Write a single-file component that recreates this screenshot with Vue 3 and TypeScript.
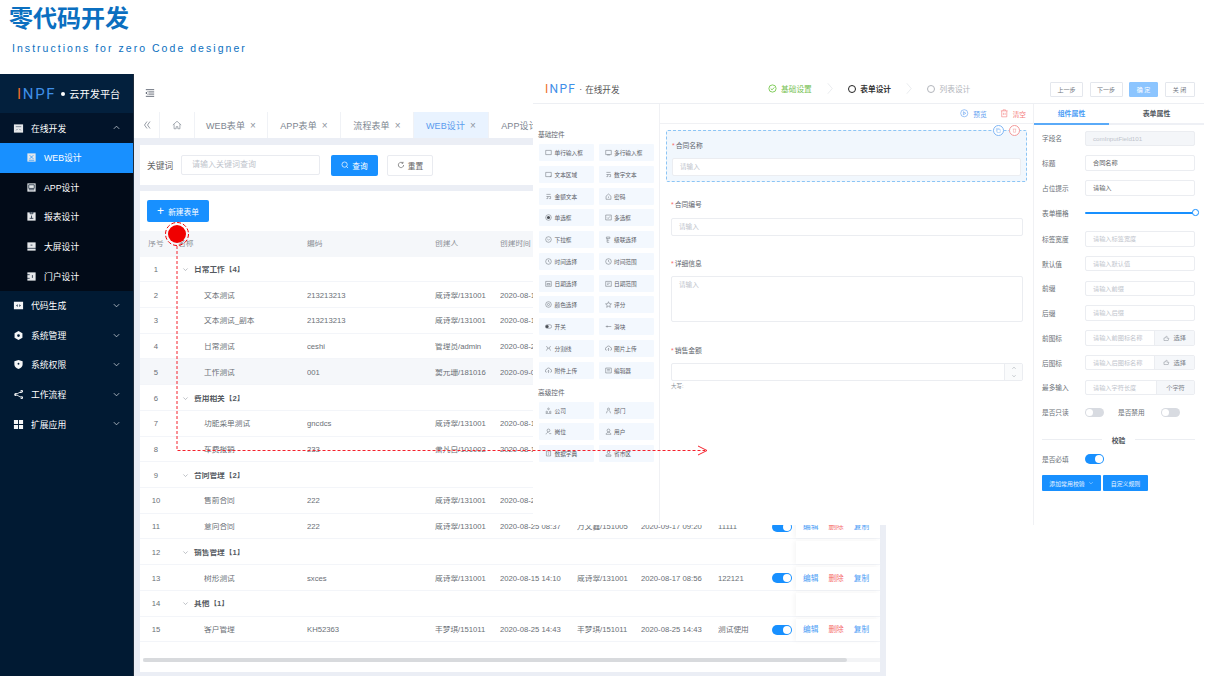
<script setup lang="ts">
interface Row { n: number; name: string; group?: boolean; code?: string; by?: string; at?: string; mod?: string; modAt?: string; note?: string }
const rows: Row[] = [
  { n: 1, name: '日常工作【4】', group: true },
  { n: 2, name: '文本测试', code: '213213213', by: '咸诗翠/131001', at: '2020-08-1' },
  { n: 3, name: '文本测试_副本', code: '213213213', by: '咸诗翠/131001', at: '2020-08-1' },
  { n: 4, name: '日常测试', code: 'ceshi', by: '管理员/admin', at: '2020-08-2' },
  { n: 5, name: '工作测试', code: '001', by: '窦元珊/181016', at: '2020-09-0' },
  { n: 6, name: '费用相关【2】', group: true },
  { n: 7, name: '功能菜单测试', code: 'gncdcs', by: '咸诗翠/131001', at: '2020-08-1' },
  { n: 8, name: '车费报销', code: '233', by: '萧凡白/101002', at: '2020-08-1' },
  { n: 9, name: '合同管理【2】', group: true },
  { n: 10, name: '售前合同', code: '222', by: '咸诗翠/131001', at: '2020-08-2' },
  { n: 11, name: '意向合同', code: '222', by: '咸诗翠/131001', at: '2020-08-25 08:37', mod: '万文鑫/151005', modAt: '2020-09-17 09:20', note: '11111' },
  { n: 12, name: '销售管理【1】', group: true },
  { n: 13, name: '树形测试', code: 'sxces', by: '咸诗翠/131001', at: '2020-08-15 14:10', mod: '咸诗翠/131001', modAt: '2020-08-17 08:56', note: '122121' },
  { n: 14, name: '其他【1】', group: true },
  { n: 15, name: '客户管理', code: 'KH52363', by: '丰梦琪/151011', at: '2020-08-25 14:43', mod: '丰梦琪/151011', modAt: '2020-08-25 14:43', note: '测试使用' },
]
const subMenu = [
  { t: 'WEB设计', d: 'M4 3.500l4 4M8 3.500l-4 4M3 9h6', active: true },
  { t: 'APP设计', d: 'M3 3h6v4H3zM3 8.500h6' },
  { t: '报表设计', d: 'M4.500 1h3v2h-3zM6 5v3M4 8h4' },
  { t: '大屏设计', d: 'M1 8h10M5 4.500h2' },
  { t: '门户设计', d: 'M1 4h3M1 8h3M7 4.500v3' },
]
const mainMenu = [
  { t: '代码生成', d: 'M1 2h10v8H1zM5 4.500L3.500 6 5 7.500M7 4.500L8.500 6 7 7.500' },
  { t: '系统管理', d: 'M6 1l4.300 2.500v5L6 11 1.700 8.500v-5zM6 4.500a1.500 1.500 0 100 3 1.500 1.500 0 000-3z' },
  { t: '系统权限', d: 'M6 1l4.500 1.500v3.500c0 2.500-2 4-4.500 5-2.500-1-4.500-2.500-4.500-5V2.500zM6 4.200a1 1 0 100 2 1 1 0 000-2z' },
  { t: '工作流程', d: 'M3 4.300a1.700 1.700 0 100 3.400 1.700 1.700 0 000-3.400zM9.500 1a1.500 1.500 0 100 3 1.500 1.500 0 000-3zM9.500 8a1.500 1.500 0 100 3 1.500 1.500 0 000-3zM3 5.700l6-3.400.4.700-6 3.400zM3.400 5.600l6 3.400-.4.700-6-3.400z' },
  { t: '扩展应用', d: 'M1 1h4.500v4.500H1zM6.500 1H11v4.500H6.500zM1 6.500h4.500V11H1zM6.500 6.500H11V11H6.500z' },
]
const tabs = ['WEB表单', 'APP表单', '流程表单', 'WEB设计', 'APP设计']
const basic = [
  ['单行输入框', 'M1 2h8v6H1z'], ['多行输入框', 'M1 2h8v6H1zM3 8.500h4'], ['文本区域', 'M1 2h8v6H1zM7 8l2-1'], ['数字文本', 'M2 2h6M2 8h2V5M6 8h2V5M2 5h6'],
  ['金额文本', 'M2 2h6M2 8h2V5M6 8h2V5M2 5h6'], ['密码', 'M1.500 9V4.500L5 1.500l3.500 3V9zM5 5v2'], ['单选框', 'R'], ['多选框', 'M1 1.500h8v7H1zM3 5l1.500 1.500L7 3.500'],
  ['下拉框', 'C M3.200 4.200L5 6l1.800-1.800'], ['级联选择', 'M2 1.500h5v2H2zM3 3.500V9M3 6h3M3 9h3'], ['时间选择', 'C M5 2.800V5l1.600 1.200'], ['时间范围', 'C M5 2.800V5l1.600 1.200'],
  ['日期选择', 'M1 2h8v7H1zM3 5h4v2H3z'], ['日期范围', 'M1 2h8v7H1zM3 4.500h4M3 6.500h2'], ['颜色选择', 'C M5 3.500a1.500 1.500 0 100 3 1.500 1.500 0 000-3z'], ['评分', 'M5 1l1.200 2.800 3 .3-2.300 2 .7 2.900L5 7.500 2.400 9l.7-2.900-2.300-2 3-.3z'],
  ['开关', 'S'], ['滑块', 'M1 5h8M3 3.500v3'], ['分割线', 'M2 1.500l2 3-2 3.500M8 1.500l-2 3 2 3.500M4 4.500h2'], ['图片上传', 'U'],
  ['附件上传', 'U'], ['编辑器', 'M1 1.500h8v7H1zM3 3.500h4M3 5.500h4'],
]
const advanced = [
  ['公司', 'M5 1.500a1.200 1.200 0 100 2.400 1.200 1.200 0 000-2.400zM2.500 6a1.200 1.200 0 100 2.400 1.200 1.200 0 000-2.400zM7.500 6a1.200 1.200 0 100 2.400 1.200 1.200 0 000-2.400zM1 9.500h8'],
  ['部门', 'M5 1.500a1.500 1.500 0 100 3 1.500 1.500 0 000-3zM2 9l1.500-4M8 9L6.500 5'],
  ['岗位', 'M5 1.500a2 2 0 100 4 2 2 0 000-4zM1.500 9c.5-2 2-3 3.500-3M6 8h3'],
  ['用户', 'M5 1.500a2 2 0 100 4 2 2 0 000-4zM1.500 9c.5-2 2-3 3.500-3s3 1 3.500 3z'],
  ['数据字典', 'M2 1.500h6v7H2zM4 4h2M4 6h2'],
  ['省市区', 'M5 1.500a1.800 1.800 0 100 3.600 1.800 1.800 0 000-3.600zM1.500 9h7v-2h-7z'],
]
const props1 = [
  { l: '标签宽度', p: '请输入标签宽度' }, { l: '默认值', p: '请输入默认值' }, { l: '前缀', p: '请输入前缀' }, { l: '后缀', p: '请输入后缀' },
]
</script>

<template>
  <div class="page">
    <header class="hero">
      <h1>零代码开发</h1>
      <p>Instructions for zero Code designer</p>
    </header>

    <div class="shell">
      <aside class="side">
        <div class="brand"><span class="logo"><i>I</i>NPF</span><b class="dot"></b><span>云开发平台</span></div>
        <div class="mi group-open">
          <svg class="ic" viewBox="0 0 12 12"><path class="fill" d="M1 1.500h10v9H1z"/><path class="cut" d="M3 4h6M5 6.500L3.500 8M7 6.500L8.500 8"/></svg>
          <span>在线开发</span>
          <svg class="caret" viewBox="0 0 10 10"><path d="M2 6.500L5 3.500l3 3"/></svg>
        </div>
        <div class="subs">
          <div v-for="s in subMenu" :key="s.t" class="si" :class="{ on: s.active }">
            <svg class="ic" viewBox="0 0 12 12"><path class="fill" d="M1.500 1.500h9v9h-9z"/><path class="cut2" :class="{ blue: s.active }" :d="s.d"/></svg>
            <span>{{ s.t }}</span>
          </div>
        </div>
        <div v-for="m in mainMenu" :key="m.t" class="mi">
          <svg class="ic" viewBox="0 0 12 12"><path class="wh" :d="m.d"/></svg>
          <span>{{ m.t }}</span>
          <svg class="caret" viewBox="0 0 10 10"><path d="M2 3.500l3 3 3-3"/></svg>
        </div>
      </aside>

      <main class="main">
        <div class="topbar">
          <svg class="fold" viewBox="0 0 12 12"><path d="M1 2h10M4 4.700h7M4 7.300h7M1 10h10M3 4.500L1 6l2 1.500"/></svg>
        </div>
        <nav class="tabs">
          <div class="tab t0"><svg viewBox="0 0 10 10"><path d="M5 1.500L2.500 5 5 8.500M8 1.500L5.500 5 8 8.500"/></svg></div>
          <div class="tab t1"><svg viewBox="0 0 12 12"><path d="M1 6l5-4.500L11 6M2.500 5v5.500h2.500V8h2v2.500h2.500V5"/></svg></div>
          <div v-for="(t, i) in tabs" :key="t" class="tab" :class="{ cur: i === 3 }">{{ t }}<em>×</em></div>
        </nav>
        <section class="card search">
          <label>关键词</label>
          <div class="s-input">请输入关键词查询</div>
          <button class="btn primary"><svg viewBox="0 0 10 10"><path d="M4.500 1.200a3.300 3.300 0 100 6.600 3.300 3.300 0 000-6.600zM7 7l1.800 1.800"/></svg>查询</button>
          <button class="btn plain"><svg viewBox="0 0 10 10"><path d="M8.300 5a3.300 3.300 0 11-1-2.400M7.500 1v1.800H5.700"/></svg>重置</button>
        </section>
        <section class="card list">
          <button class="btn primary add"><span>+</span>新建表单</button>
          <div class="row head">
            <div class="c-n">序号</div><div class="c-name">名称</div><div>编码</div><div>创建人</div><div>创建时间</div><div></div><div></div><div></div><div></div><div class="ops"></div>
          </div>
          <div v-for="r in rows" :key="r.n" class="row" :class="{ hov: r.n === 5, grp: r.group }">
            <div class="c-n">{{ r.n }}</div>
            <div class="c-name" :class="r.group ? 'g' : 'l'">
              <svg v-if="r.group" viewBox="0 0 10 10"><path d="M2 3.500l3 3 3-3"/></svg>{{ r.name }}
            </div>
            <div>{{ r.code }}</div><div>{{ r.by }}</div><div>{{ r.at }}</div><div>{{ r.mod }}</div><div>{{ r.modAt }}</div><div>{{ r.note }}</div>
            <div><span v-if="r.mod" class="sw big on"></span></div>
            <div class="ops"><template v-if="r.mod"><a>编辑</a><a class="del">删除</a><a>复制</a></template></div>
          </div>
          <div class="scroll"><div></div></div>
        </section>
      </main>
    </div>

    <div class="designer">
      <div class="d-head">
        <div class="d-brand"><span class="logo small"><i>I</i>NPF</span><span class="sep">·</span><span>在线开发</span></div>
        <div class="steps">
          <div class="step ok"><svg viewBox="0 0 10 10"><circle cx="5" cy="5" r="4"/><path d="M3 5l1.500 1.500L7 3.800"/></svg>基础设置</div>
          <svg class="arrow" viewBox="0 0 8 16"><path d="M1 1l6 7-6 7"/></svg>
          <div class="step act"><i class="ring"></i>表单设计</div>
          <svg class="arrow" viewBox="0 0 8 16"><path d="M1 1l6 7-6 7"/></svg>
          <div class="step off"><i class="ring"></i>列表设计</div>
        </div>
        <div class="d-btns">
          <button>上一步</button><button>下一步</button><button class="sure">确 定</button><button class="close">关 闭</button>
        </div>
      </div>
      <div class="d-body">
        <div class="palette">
          <h4>基础控件</h4>
          <div class="pgrid">
            <div v-for="b in basic" :key="b[0]" class="pi">
              <svg viewBox="0 0 10 10">
                <template v-if="b[1] === 'R'"><circle cx="5" cy="5" r="4"/><circle class="solid" cx="5" cy="5" r="2.200"/></template>
                <template v-else-if="b[1] === 'S'"><rect x=".5" y="2.500" width="9" height="5" rx="2.500"/><circle class="solid" cx="3" cy="5" r="2.200"/></template>
                <template v-else-if="b[1] === 'U'"><path d="M2.500 7.500a2 2 0 01-.2-4 2.800 2.800 0 015.400 0 2 2 0 01-.2 4M5 8.500V5M3.800 6L5 4.800 6.200 6"/></template>
                <template v-else-if="b[1].startsWith('C ')"><circle cx="5" cy="5" r="4"/><path :d="b[1].slice(2)"/></template>
                <path v-else :d="b[1]"/>
              </svg>
              <span>{{ b[0] }}</span>
            </div>
          </div>
          <h4 class="adv">高级控件</h4>
          <div class="pgrid">
            <div v-for="b in advanced" :key="b[0]" class="pi">
              <svg viewBox="0 0 10 10"><path :d="b[1]"/></svg><span>{{ b[0] }}</span>
            </div>
          </div>
        </div>
        <div class="canvas">
          <div class="c-tools">
            <span class="tool blue"><svg viewBox="0 0 10 10"><circle cx="5" cy="5" r="4.200"/><path d="M4 3.200v3.600L6.800 5z"/></svg>预览</span>
            <span class="tool red"><svg viewBox="0 0 10 10"><path d="M1 2.200h8M3.500 2V1h3v1M2 2.200V9.200h6V2.200M4 4.500v2.500M6 4.500v2.500"/></svg>清空</span>
          </div>
          <div class="form">
            <div class="selected">
              <label class="fl"><b>*</b>合同名称</label>
              <div class="fi">请输入</div>
              <span class="corner cb"><svg viewBox="0 0 10 10"><path d="M3 3.500h4.500V8H3zM2 6.500V2h4.500"/></svg></span>
              <span class="corner cr"><svg viewBox="0 0 10 10"><path d="M2.500 3h5M3.500 3v4.500h3V3"/></svg></span>
            </div>
            <div class="field f2"><label class="fl"><b>*</b>合同编号</label><div class="fi">请输入</div></div>
            <div class="field f3"><label class="fl"><b>*</b>详细信息</label><div class="fi ta">请输入</div></div>
            <div class="field f4">
              <label class="fl"><b>*</b>销售金额</label>
              <div class="fi num"><span class="stepper"><svg viewBox="0 0 10 10"><path d="M3 6l2-2 2 2"/></svg><svg viewBox="0 0 10 10"><path d="M3 4l2 2 2-2"/></svg></span></div>
              <div class="daxie">大写:</div>
            </div>
          </div>
        </div>
        <div class="props">
          <div class="p-tabs"><div class="p-on">组件属性</div><div>表单属性</div></div>
          <div class="p-body">
            <div class="pr"><label>字段名</label><div class="pinp dis">comInputField101</div></div>
            <div class="pr"><label>标题</label><div class="pinp val">合同名称</div></div>
            <div class="pr"><label>占位提示</label><div class="pinp val">请输入</div></div>
            <div class="pr slider-row"><label>表单栅格</label><div class="slider"><i></i></div></div>
            <div v-for="p in props1" :key="p.l" class="pr"><label>{{ p.l }}</label><div class="pinp">{{ p.p }}</div></div>
            <div class="pr"><label>前图标</label><div class="pinp grp-i"><span>请输入前图标名称</span><em><svg viewBox="0 0 10 10"><path d="M1.500 4.500v4h6.500l1-3.500H6l.3-2.500c-.3-1-1-1-1.300-.8L3.500 4.500z"/></svg>选择</em></div></div>
            <div class="pr"><label>后图标</label><div class="pinp grp-i"><span>请输入后图标名称</span><em><svg viewBox="0 0 10 10"><path d="M1.500 4.500v4h6.500l1-3.500H6l.3-2.500c-.3-1-1-1-1.300-.8L3.500 4.500z"/></svg>选择</em></div></div>
            <div class="pr"><label>最多输入</label><div class="pinp grp-i"><span>请输入字符长度</span><em class="unit">个字符</em></div></div>
            <div class="pr toggles"><label>是否只读</label><span class="sw"></span><label class="l2">是否禁用</label><span class="sw"></span></div>
            <div class="divider"><i></i><span>校验</span><i></i></div>
            <div class="pr req"><label>是否必填</label><span class="sw on"></span></div>
            <div class="actions"><button>添加常用校验<svg viewBox="0 0 10 10"><path d="M2 3.500l3 3 3-3"/></svg></button><button class="b2">自定义规则</button></div>
          </div>
        </div>
      </div>
    </div>

    <svg class="note" viewBox="0 0 1214 676" width="1214" height="676">
      <circle cx="177" cy="234" r="9" fill="#f00000"/>
      <circle cx="177" cy="234" r="11.500" fill="none" stroke="#f00000" stroke-width="1" stroke-dasharray="4 2"/>
      <path d="M177 246V450.500H705" fill="none" stroke="#f5222d" stroke-width="1" stroke-dasharray="3 2"/>
      <path d="M698 446l9 4.500-9 4.500" fill="none" stroke="#f5222d" stroke-width="1"/>
    </svg>
  </div>
</template>

<style>
html, body { margin: 0; background: #fff; overflow: hidden; }
</style>

<style scoped>
.page { position: relative; width: 1214px; height: 676px; overflow: hidden; background: #fff; font-family: "Liberation Sans", "Noto Sans CJK SC", sans-serif; color: #606266; }
.hero { height: 74px; box-sizing: border-box; padding: 4px 0 0 9px; }
.hero h1 { margin: 0; font-size: 24px; line-height: 30px; font-weight: 700; color: #0b6fc0; }
.hero p { margin: 7px 0 0 3px; font-size: 10.5px; line-height: 14px; letter-spacing: 2.04px; color: #0b6fc0; }

.shell { display: flex; width: 886px; height: 602px; }
.side { width: 133px; flex: none; background: #011a33; color: #fff; font-size: 8.8px; border-right: 1px solid #1f2d3d; }
.brand { height: 39px; display: flex; align-items: center; padding-left: 17px; background: #03203d; font-size: 10.2px; }
.logo { font-family: Roboto, "Liberation Sans", sans-serif; font-size: 15px; letter-spacing: 1.7px; color: #3f8fe8; font-weight: 400; }
.logo i { font-style: normal; color: #ee6d2a; }
.dot { width: 4px; height: 4px; background: #fff; border-radius: 50%; margin: 0 4px 0 5px; }
.mi { height: 29.6px; display: flex; align-items: center; padding-left: 13px; box-sizing: border-box; position: relative; }
.mi span { margin-left: 7px; }
.group-open { height: 30px; background: #02142a; }
.ic { width: 11px; height: 11px; flex: none; }
.fill { fill: #e6e8eb; }
.cut { stroke: #5c6b7a; stroke-width: .8; fill: none; }
.cut2 { stroke: #0a1c30; stroke-width: .8; fill: none; }
.cut2.blue { stroke: #1890ff; }
.wh { fill: #f5f6f7; fill-rule: evenodd; }
.caret { position: absolute; left: 112px; top: 10px; width: 9px; height: 9px; fill: none; stroke: #c4ccd4; stroke-width: .9; }
.subs { background: #020b18; }
.si { height: 29.6px; display: flex; align-items: center; padding-left: 26px; }
.si span { margin-left: 7px; }
.si.on { background: #1890ff; }

.main { flex: 1; background: #ebeef5; min-width: 0; }
.topbar { height: 38px; background: #fff; display: flex; align-items: center; padding-left: 11px; }
.fold { width: 10px; height: 10px; fill: none; stroke: #4a5260; stroke-width: 1; }
.tabs { height: 26px; background: #fff; display: flex; overflow: hidden; font-size: 9px; color: #7d8590; }
.tab { flex: none; width: 73px; box-sizing: border-box; border-right: 1px solid #f0f2f6; display: flex; align-items: center; justify-content: center; gap: 5px; letter-spacing: .1px; }
.tab em { font-style: normal; font-size: 10px; color: #8f959e; }
.tab svg { fill: none; stroke: #7d8590; stroke-width: .8; }
.t0 { width: 26px; } .t0 svg { width: 10px; height: 10px; }
.t1 { width: 35px; } .t1 svg { width: 10px; height: 10px; }
.tab.cur { background: #e9f3ff; color: #5a9bee; width: 75px; }
.card { background: #fff; margin: 7px 6px 0; }
.search { height: 40px; display: flex; align-items: center; padding-left: 7px; font-size: 8.7px; color: #666; margin-bottom: 6px; box-sizing: border-box; }
.s-input { width: 139px; height: 20px; box-sizing: border-box; border: 1px solid #e9ebf0; border-radius: 2px; margin-left: 8px; padding-left: 10px; line-height: 18px; color: #c0c4cc; font-size: 8px; }
.btn { border: 0; border-radius: 2px; font: inherit; font-size: 7.7px; display: inline-flex; align-items: center; justify-content: center; padding: 0; box-sizing: border-box; }
.btn svg { width: 8px; height: 8px; margin-right: 3px; fill: none; stroke: currentColor; stroke-width: .9; }
.primary { background: #1890ff; color: #fff; }
.search .primary { width: 47px; height: 21px; margin-left: 11px; }
.plain { width: 46px; height: 21px; margin-left: 9px; background: #fff; border: 1px solid #e9ebf0; color: #666; }
.list { margin: 0 6px; height: 481px; padding-top: 9px; box-sizing: border-box; }
.add { width: 62px; height: 22px; margin-left: 7px; display: flex; }
.add span { font-size: 12px; font-weight: 300; margin-right: 4px; line-height: 12px; }
.row { display: grid; grid-template-columns: 32px 135px 128px 65px 77px 64px 77px 54px 24px 84px; height: 25.72px; box-sizing: border-box; align-items: center; border-bottom: 1px solid #f3f5f9; font-size: 7.7px; color: #6a6f76; line-height: 1; padding-top: 2px; }
.row > div { white-space: nowrap; overflow: hidden; }
.head { height: 25.5px; margin-top: 9px; background: #f5f7fa; color: #8c9097; border-bottom: 0; padding-top: 0; }
.hov { background: #f5f7fa; }
.c-n { text-align: center; }
.head .c-name { padding-left: 6px; }
.c-name svg { width: 7px; height: 7px; fill: none; stroke: #9aa0a8; stroke-width: .9; margin-right: 5px; vertical-align: -1px; }
.g { padding-left: 10px; font-weight: 700; color: #555a61; }
.l { padding-left: 32px; }
.ops { height: 100%; box-shadow: -2px 0 4px rgba(0, 0, 0, .04); padding-left: 7px; display: flex; align-items: center; gap: 10px; box-sizing: border-box; }
.ops a { color: #4a9cf5; }
.ops a.del { color: #f56c6c; }
.scroll { margin: 15.75px 0 0 3px; height: 4px; background: #f3f4f6; }
.scroll div { width: 704px; height: 4px; background: #d8dadd; border-radius: 2px; }

.sw { display: inline-block; position: relative; width: 19px; height: 9px; border-radius: 5px; background: #d8dbe1; vertical-align: middle; }
.sw::after { content: ""; position: absolute; left: 1px; top: 1px; width: 7px; height: 7px; background: #fff; border-radius: 50%; }
.sw.on { background: #1890ff; }
.sw.on::after { left: 11px; }
.sw.big { width: 20px; height: 10px; }
.sw.big::after { left: 11px; width: 8px; height: 8px; }

.designer { position: absolute; left: 533px; top: 74px; width: 671px; height: 451px; background: #fff; display: flex; flex-direction: column; font-size: 6.7px; }
.d-head { height: 30px; flex: none; box-sizing: border-box; border-bottom: 1px solid #edeff3; display: flex; align-items: center; position: relative; }
.d-brand { width: 217px; padding-left: 12px; box-sizing: border-box; display: flex; align-items: center; font-size: 8.6px; color: #555; }
.logo.small { font-size: 12px; letter-spacing: 1.3px; }
.sep { margin: 0 3px 0 3px; }
.steps { display: flex; align-items: center; font-size: 7.7px; width: 300px; }
.step { display: flex; align-items: center; }
.step svg { width: 9px; height: 9px; fill: none; stroke: #67c23a; stroke-width: .9; margin-right: 4px; }
.step.ok { color: #76c151; margin-left: 18px; }
.step.act { color: #333; font-weight: 700; }
.step.off { color: #b2b5bb; }
.ring { width: 6px; height: 6px; border: 1.200px solid currentColor; border-radius: 50%; margin-right: 4.500px; }
.step.act .ring { border-color: #222; }
.arrow { width: 6px; height: 13px; fill: none; stroke: #dfe2e7; stroke-width: .9; margin: 0 15px; }
.d-btns { position: absolute; left: 517px; top: 8px; display: flex; }
.d-btns button { width: 33px; height: 15px; margin-right: 6.500px; padding: 0; background: #fff; border: 1px solid #e4e7ed; border-radius: 1px; color: #707680; font: inherit; font-size: 6px; }
.d-btns .sure { width: 29px; background: #8cc5ff; border-color: #8cc5ff; color: #fff; }
.d-btns .close { width: 30px; }
.d-body { flex: 1; display: flex; min-height: 0; }
.palette { width: 127px; flex: none; box-sizing: border-box; border-right: 1px solid #f0f1f4; padding: 27px 6px 0; }
.palette h4 { margin: 0 0 5px -1px; font-size: 6.7px; line-height: 8px; font-weight: 400; color: #60656d; }
.palette h4.adv { margin: 10px 0 5px -1px; }
.pgrid { display: grid; grid-template-columns: 55px 55px; column-gap: 4.500px; row-gap: 4.750px; }
.pi { height: 17px; background: #f3f8fe; border-radius: 1px; display: flex; align-items: center; padding-left: 6px; font-size: 5.700px; color: #5c6067; }
.pi svg { width: 7px; height: 7px; margin-right: 2.500px; flex: none; fill: none; stroke: #606770; stroke-width: .7; }
.pi .solid { fill: #4a4f56; stroke: none; }
.canvas { width: 374px; flex: none; box-sizing: border-box; border-right: 1px solid #f0f1f4; }
.c-tools { height: 20px; box-sizing: border-box; border-bottom: 1px solid #f0f1f4; display: flex; justify-content: flex-end; align-items: center; padding-right: 7px; margin-left: -1px; }
.tool { display: flex; align-items: center; margin-left: 13px; font-size: 6.700px; }
.tool svg { width: 8.500px; height: 8.500px; margin-right: 4.500px; fill: none; stroke: currentColor; stroke-width: .7; }
.blue { color: #5d9df0; } .red { color: #f47a7a; }
.form { padding: 6px 6px 0 6px; }
.selected { position: relative; height: 52px; box-sizing: border-box; background: #f1f7fd; border: 1px dashed #8cc5f5; border-radius: 2px; padding: 10px 5px 0; }
.fl { display: block; font-size: 6.800px; line-height: 9px; color: #60656d; }
.fl b { color: #f56c6c; font-weight: 400; margin-right: 1px; }
.fi { height: 18px; margin-top: 8px; box-sizing: border-box; background: #fff; border: 1px solid #ebedf1; border-radius: 2px; padding-left: 7px; line-height: 16px; font-size: 6.600px; color: #c0c4cc; }
.corner { position: absolute; top: -6px; border-radius: 50%; background: #fff; border: 1px solid; width: 9px; height: 9px; display: flex; align-items: center; justify-content: center; }
.corner svg { width: 7px; height: 7px; fill: none; stroke: currentColor; stroke-width: .7; }
.cb { right: 22px; color: #7fb6f5; } .cr { right: 6px; color: #f39a9a; }
.field { padding-left: 5px; padding-right: 4px; }
.f2 { margin-top: 18px; }
.f2 .fi { margin-top: 9px; }
.f3 { margin-top: 23px; }
.f3 .fi { margin-top: 8px; height: 46px; }
.f4 { margin-top: 24px; position: relative; }
.f4 .fi { margin-top: 8px; position: relative; }
.stepper { position: absolute; right: 0; top: 0; bottom: 0; width: 17px; border-left: 1px solid #ebedf1; display: flex; flex-direction: column; background: #fafbfc; }
.stepper svg { width: 8px; height: 8px; margin: 0 auto; fill: none; stroke: #9ba1a9; stroke-width: .7; }
.daxie { font-size: 5.500px; line-height: 8px; margin-top: 1px; color: #8a8f96; }
.props { flex: 1; min-width: 0; }
.p-tabs { height: 21px; display: flex; box-sizing: border-box; border-bottom: 2px solid #eef0f5; font-size: 6.900px; font-weight: 700; color: #50555c; }
.p-tabs div { width: 75px; text-align: center; line-height: 19px; height: 21px; box-sizing: border-box; }
.p-tabs div + div { width: 95px; }
.p-on { color: #4a9cf5; border-bottom: 2px solid #5aaaf8; }
.p-body { padding: 5.500px 9px 0 8px; }
.pr { display: flex; align-items: center; height: 15.500px; margin-bottom: 9.250px; }
.pr > label { width: 43px; flex: none; color: #6a6f76; font-size: 6.700px; }
.pinp { flex: 1; height: 15.500px; box-sizing: border-box; border: 1px solid #ebedf1; border-radius: 2px; padding-left: 7px; line-height: 13.500px; color: #c0c4cc; font-size: 6.200px; }
.pinp.dis { background: #f4f6f9; }
.pinp.val { color: #606266; }
.grp-i { display: flex; padding-left: 0; }
.grp-i span { flex: 1; padding-left: 7px; white-space: nowrap; overflow: hidden; }
.grp-i em { width: 40px; flex: none; box-sizing: border-box; background: #f5f7fa; border-left: 1px solid #ebedf1; font-style: normal; color: #7d838b; display: flex; align-items: center; justify-content: center; }
.grp-i em.unit { width: 38px; }
.grp-i em svg { width: 6.500px; height: 6.500px; margin-right: 4px; fill: none; stroke: currentColor; stroke-width: .7; }
.slider-row { margin-bottom: 12px; margin-top: 11.500px; height: 12px; }
.slider { flex: 1; height: 2.500px; background: #1890ff; border-radius: 2px; position: relative; }
.slider i { position: absolute; right: -3.500px; top: -2.500px; width: 4.500px; height: 4.500px; box-sizing: content-box; border: 1px solid #1890ff; border-radius: 50%; background: #fff; }
.toggles { margin-top: 1px; }
.toggles .sw, .req .sw { flex: none; }
.pr > .l2 { margin-left: 14px; width: 43px; color: #6a6f76; font-size: 6.700px; }
.divider { display: flex; align-items: center; height: 9px; margin: 15.500px 0 8px; font-size: 6.800px; font-weight: 700; color: #50555c; }
.divider i { flex: 1; height: 1px; background: #eceef2; }
.divider span { margin: 0 10px; }
.req { margin-bottom: 10px; height: 13px; }
.req .sw { width: 19px; height: 10px; }
.req .sw::after { width: 8px; height: 8px; left: 10px; }
.actions { display: flex; gap: 2px; }
.actions button { width: 59px; height: 16px; padding: 0; border: 0; border-radius: 1px; background: #1890ff; color: #e8f3ff; font: inherit; font-size: 5.900px; display: flex; align-items: center; justify-content: center; }
.actions button svg { width: 6px; height: 6px; margin-left: 3px; fill: none; stroke: currentColor; stroke-width: .7; }
.actions .b2 { width: 45px; }
.note { position: absolute; left: 0; top: 0; pointer-events: none; }
</style>
